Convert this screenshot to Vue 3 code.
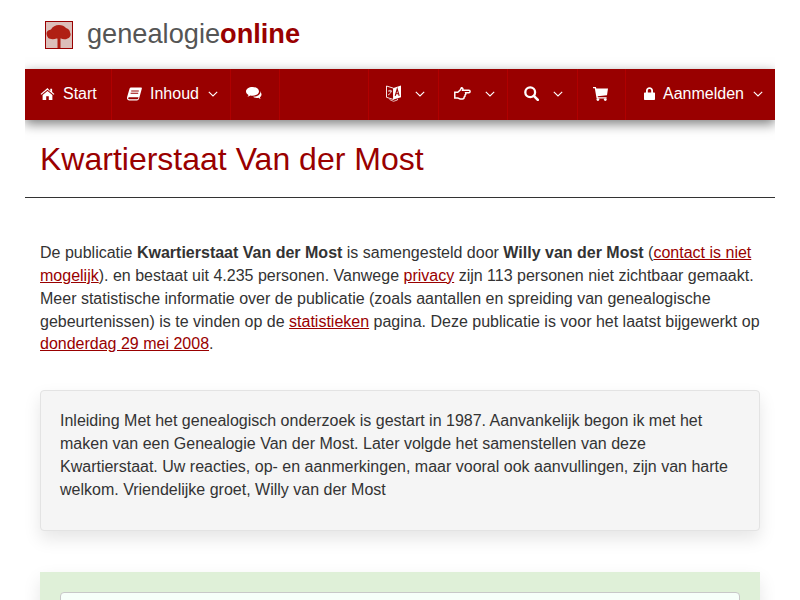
<script setup>
const leftNav = [
  { label: 'Start', icon: 'home', w: 87, pad: 15 },
  { label: 'Inhoud', icon: 'book', caret: true, w: 119, pad: 15 },
  { icon: 'chat', w: 49, pad: 15 }
]
const rightNav = [
  { icon: 'lang', caret: true, w: 70, pad: 17, cg: 6 },
  { icon: 'hand', caret: true, w: 69, pad: 15, cg: 6 },
  { icon: 'search', caret: true, w: 70, pad: 16, cg: 6 },
  { icon: 'cart', w: 48, pad: 15 },
  { label: 'Aanmelden', icon: 'lock', caret: true, w: 150, pad: 18 }
]
const itemStyle = (item) => ({ width: item.w + 'px', paddingLeft: item.pad + 'px' })
const caretStyle = (item) => ({ marginLeft: (item.cg || 1) + 'px' })
</script>

<template>
  <div class="page">
    <header class="brand">
      <svg class="logo" width="28" height="28" viewBox="0 0 28 28">
        <rect width="28" height="28" fill="#990000" />
        <rect x="1" y="1" width="26" height="26" fill="#dcbfba" />
        <path class="tree" d="M1.500 12.500c0-2.500 2.500-3.500 4.500-4 1.500-3 4.500-4.500 8-4.500 3 0 5.500 1 7 3 2.500.5 4 2.500 4 4.500 1.500 2.500 0 5.500-2.500 6-2 1.200-5 1-6.500 0-1 .5-1 .5-.5.500v9h-3v-9c0-.5-.5-.5-1-.5-2 1-5 1-6.500.3-2-.3-3.500-3-3.500-5.800z" fill="#b01f14" />
      </svg>
      <span class="wordmark">genealogie<b>online</b></span>
    </header>

    <nav class="navbar">
      <div class="group">
        <a v-for="item in leftNav" :key="item.icon" class="item" :style="itemStyle(item)">
          <svg v-if="item.icon === 'home'" class="ico" width="15" height="12" viewBox="0 0 15 13"><path d="M7.500 0 0 6.400l.8 1L7.500 1.800l6.700 5.600.8-1-2.500-2.100V.8h-2v2.700zM2.200 7.600V13h3.900V9h2.800v4h3.900V7.600L7.500 3.200z" fill="#fff"/></svg>
          <svg v-if="item.icon === 'book'" class="ico" width="15" height="14" viewBox="0 0 15 13"><path d="M4 0h10c.8 0 1 .6.8 1.300l-2.600 9.400c-.3 1.200-1 2.300-2.400 2.300H2.400C1 13 0 12 0 10.600c0-.5.1-.9.2-1.300L2.600 1C2.800.4 3.300 0 4 0zm.2 3v1h7.600V3zm-.6 2.200v1h7.600v-1zM2.200 9.800c-.6 0-1 .4-1 .9 0 .7.5 1.100 1.200 1.100h7.900c.5 0 .8-.4 1-1l.2-1z" fill="#fff" fill-rule="evenodd"/></svg>
          <svg v-if="item.icon === 'chat'" class="ico" width="16" height="13" viewBox="0 0 16 13"><path d="M6.500 0C2.900 0 0 2 0 4.400c0 1.400 1 2.700 2.500 3.500-.2.700-.6 1.300-1.200 1.900 1.100-.1 2.200-.6 3.100-1.300.7.100 1.400.2 2.100.2 3.600 0 6.500-2 6.500-4.300S10.100 0 6.500 0z" fill="#fff"/><path d="M14.300 3.900c.1.300.1.500.1.800 0 2.900-3.300 5-7 5h-.5c1 .8 2.500 1.300 4 1.300.5 0 1-.1 1.500-.2.700.6 1.500 1 2.300 1.100-.4-.5-.7-1-.9-1.500 1.100-.7 1.700-1.700 1.700-2.800 0-1.500-.7-2.700-1.700-3.700z" fill="#fff"/></svg>
          <span v-if="item.label" class="label">{{ item.label }}</span>
          <svg v-if="item.caret" class="caret" width="10" height="6" viewBox="0 0 10 6"><path d="M.8.8 5 5 9.200.8" fill="none" stroke="#fff" stroke-width="1.100"/></svg>
        </a>
      </div>
      <div class="group">
        <a v-for="item in rightNav" :key="item.icon" class="item" :style="itemStyle(item)">
          <svg v-if="item.icon === 'lang'" class="ico" width="15" height="17" viewBox="0 0 15 17"><path d="M.5 1 7.500 3.200v11.300L.5 12.300z" fill="none" stroke="#fff" stroke-width=".9"/><path d="M7.500 3 15 .6v11.700l-7.500 2.200z" fill="#fff"/><path d="M9.200 10.800l2-6.800 2 6.800M10 8.700h2.500" fill="none" stroke="#900" stroke-width="1.100"/><path d="M2 6h4M4 4.800V6M5.200 6c-.3 2-1.500 3.200-3.200 4" fill="none" stroke="#fff" stroke-width=".8"/><path d="M3.500 14.500 7.500 16.300 11.500 15V13.800" fill="none" stroke="#fff" stroke-width=".7"/></svg>
          <svg v-if="item.icon === 'hand'" class="ico" width="17" height="13" viewBox="0 0 17 13"><path d="M.8 5.200h3l2.400-2.200L7.400.8c1.400 0 1.900 1.200 1.300 2.400h6.200c1.600 0 1.600 2.500 0 2.500h-3.200c.3 1-.1 2-.6 2.300.1 1-.3 1.700-.9 2 0 1.200-.7 1.900-1.700 1.900H6.200l-2.400-.9H.8z" fill="none" stroke="#fff" stroke-width="1.500"/></svg>
          <svg v-if="item.icon === 'search'" class="ico" width="15" height="15" viewBox="0 0 15 15"><circle cx="6.200" cy="6.200" r="4.900" fill="none" stroke="#fff" stroke-width="2.300"/><path d="m9.800 9.800 4 4" stroke="#fff" stroke-width="2.600" stroke-linecap="round"/></svg>
          <svg v-if="item.icon === 'cart'" class="ico" width="15" height="14" viewBox="0 0 15 14"><path d="M0 0h2.900l.4 1.600H15l-1 6.600-9.300 1 .2 1h8.700v1.300H3.600L1.800 1.300H0z" fill="#fff"/><circle cx="4.900" cy="12.600" r="1.400" fill="#fff"/><circle cx="12.300" cy="12.600" r="1.400" fill="#fff"/></svg>
          <svg v-if="item.icon === 'lock'" class="ico" width="11" height="13" viewBox="0 0 11 13"><path d="M2 5.500V3.600C2 1.600 3.500.3 5.500.3S9 1.600 9 3.600v1.900h1c.6 0 1 .4 1 1v5.500c0 .6-.4 1-1 1H1c-.6 0-1-.4-1-1V6.500c0-.6.4-1 1-1zm1.800 0h3.400V3.600c0-1-.7-1.600-1.700-1.600s-1.700.6-1.700 1.600z" fill="#fff" fill-rule="evenodd"/></svg>
          <span v-if="item.label" class="label">{{ item.label }}</span>
          <svg v-if="item.caret" class="caret" :style="caretStyle(item)" width="10" height="6" viewBox="0 0 10 6"><path d="M.8.8 5 5 9.200.8" fill="none" stroke="#fff" stroke-width="1.100"/></svg>
        </a>
      </div>
    </nav>

    <h1 class="title">Kwartierstaat Van der Most</h1>

    <p class="intro">
      De publicatie <b>Kwartierstaat Van der Most</b> is samengesteld door <b>Willy van der Most</b> (<a href="#">contact is niet mogelijk</a>). en bestaat uit 4.235 personen. Vanwege <a href="#">privacy</a> zijn 113 personen niet zichtbaar gemaakt. Meer statistische informatie over de publicatie (zoals aantallen en spreiding van genealogische gebeurtenissen) is te vinden op de <a href="#">statistieken</a> pagina. Deze publicatie is voor het laatst bijgewerkt op <a href="#">donderdag 29 mei 2008</a>.
    </p>

    <div class="well">
      Inleiding Met het genealogisch onderzoek is gestart in 1987. Aanvankelijk begon ik met het maken van een Genealogie Van der Most. Later volgde het samenstellen van deze Kwartierstaat. Uw reacties, op- en aanmerkingen, maar vooral ook aanvullingen, zijn van harte welkom. Vriendelijke groet, Willy van der Most
    </div>

    <div class="green">
      <div class="inner"></div>
    </div>
  </div>
</template>

<style scoped>
.page {
  width: 750px;
  margin: 0 auto;
  height: 600px;
  overflow: hidden;
  font-family: "Liberation Sans", Arial, sans-serif;
  font-size: 16px;
  line-height: 1.42857;
  color: #333;
  box-sizing: border-box;
  padding-top: 21px;
}
.brand {
  display: flex;
  align-items: center;
  height: 28px;
  padding-left: 20px;
  gap: 14px;
}
.logo { flex: none; }
.tree { filter: blur(0.6px); }
.wordmark {
  font-size: 27.2px;
  line-height: 28px;
  color: #555;
  padding-bottom: 2px;
}
.wordmark b { color: #990000; }
.navbar {
  margin-top: 20px;
  height: 51px;
  background: #990000;
  display: flex;
  justify-content: space-between;
  box-shadow: 0 4px 11px rgba(0, 0, 0, 0.5);
  position: relative;
}
.group { display: flex; }
.item {
  display: flex;
  align-items: center;
  justify-content: flex-start;
  gap: 8px;
  color: #fff;
  box-sizing: border-box;
  border-right: 1px solid #b00000;
  padding-bottom: 2px;
  text-decoration: none;
}
.group:last-child .item { border-right: none; border-left: 1px solid #b00000; }
.label { white-space: nowrap; padding-top: 2px; }
.ico { flex: none; }
.caret { flex: none; margin-left: 1px; }
.title {
  margin: 0;
  padding: 20px 15px 18px;
  font-size: 32px;
  line-height: 39px;
  font-weight: 400;
  color: #990000;
  border-bottom: 1px solid #333;
}
.intro {
  margin: 44px 0 0;
  padding: 0 15px;
}
.intro a { color: #990000; text-decoration: underline; }
.well {
  margin: 34px 15px 0;
  padding: 19px;
  height: 141px;
  box-sizing: border-box;
  background: #f5f5f5;
  border: 1px solid #e3e3e3;
  border-radius: 4px;
  box-shadow: 0 8px 17px rgba(0, 0, 0, 0.1);
}
.green {
  margin: 41px 15px 0;
  padding: 20px;
  height: 100px;
  background: #dff0d8;
  box-shadow: 0 8px 17px rgba(0, 0, 0, 0.1);
}
.inner {
  height: 100px;
  background: #f7fffa;
  border: 1px solid #c8c8c8;
  border-radius: 4px;
}
</style>
